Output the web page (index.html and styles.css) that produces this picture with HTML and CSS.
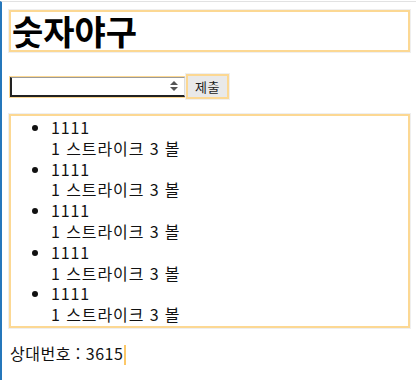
FILE: index.html
```html
<!DOCTYPE html>
<html lang="ko">
<head>
    <meta charset="UTF-8">
    <meta name="viewport" content="width=device-width, initial-scale=1.0">
    <title>숫자야구</title>
    <link rel="stylesheet" href="styles.css">
</head>
<body>
    <div class="page">
        <h1 class="title">숫자야구</h1>

        <div class="guess_row">
            <select id="guess" class="guess_select"></select>
            <button class="submit_btn">제출</button>
        </div>

        <ul class="history">
            <li>1111<br>1 스트라이크 3 볼</li>
            <li>1111<br>1 스트라이크 3 볼</li>
            <li>1111<br>1 스트라이크 3 볼</li>
            <li>1111<br>1 스트라이크 3 볼</li>
            <li>1111<br>1 스트라이크 3 볼</li>
        </ul>

        <div class="opponent">상대번호 : 3615<span class="caret"></span></div>
    </div>
</body>
</html>
```

FILE: styles.css
```css
  html, body {
      margin: 0;
      background: #fff;
  }

  body {
      font-family: "Noto Sans CJK KR", sans-serif;
      font-size: 16px;
      color: #111;
  }

  .page {
      margin-top: 1px;
      border-top: 1px solid #e2e2e2;
      border-left: 2px solid #2577bb;
      min-height: 378px;
      padding: 8px 6px 0 7px;
  }

  /* highlighted boxes: orange border with a faint grey ring */
  .title,
  .history,
  .submit_btn {
      border: 2px solid #fcd893;
      box-shadow: 0 0 0 1px #efefef;
  }

  .title {
      margin: 0;
      padding: 0 1px;
      font-size: 34px;
      font-weight: bold;
      line-height: 38px;
      color: #000;
  }

  .guess_row {
      display: flex;
      align-items: center;
      margin-top: 22px;
      padding-left: 1px;
  }

  .guess_select {
      -webkit-appearance: none;
      appearance: none;
      width: 175px;
      height: 20px;
      margin: 0;
      border-left: 2px solid #222;
      border-bottom: 2px solid #222;
      border-top: 1px solid #9a9a9a;
      border-right: 1px solid #ddd;
      background: #fff url("data:image/svg+xml;utf8,<svg xmlns='http://www.w3.org/2000/svg' width='10' height='12'><path d='M5 1 L9 5 H1 Z M5 11 L9 7 H1 Z' fill='%23555'/></svg>") no-repeat right 5px center;
      box-shadow: 0 0 0 1px #fcd893;
  }

  .submit_btn {
      margin-left: 1px;
      height: 25px;
      padding: 0 7px;
      background: #e9e9e9;
      font-family: "Noto Sans CJK KR", sans-serif;
      font-size: 13px;
      letter-spacing: 0.5px;
      color: #222;
  }

  .history {
      margin: 15px 0 0 0;
      padding: 1px 0 1px 40px;
      line-height: 20.8px;
      letter-spacing: 0.9px;
  }

  .opponent {
      margin-top: 15px;
      padding-left: 1px;
      line-height: 21px;
      letter-spacing: 0.5px;
  }

  .caret {
      display: inline-block;
      width: 0;
      height: 20px;
      margin-left: 1px;
      border-left: 2px solid #fcc868;
      vertical-align: -5px;
  }
```
